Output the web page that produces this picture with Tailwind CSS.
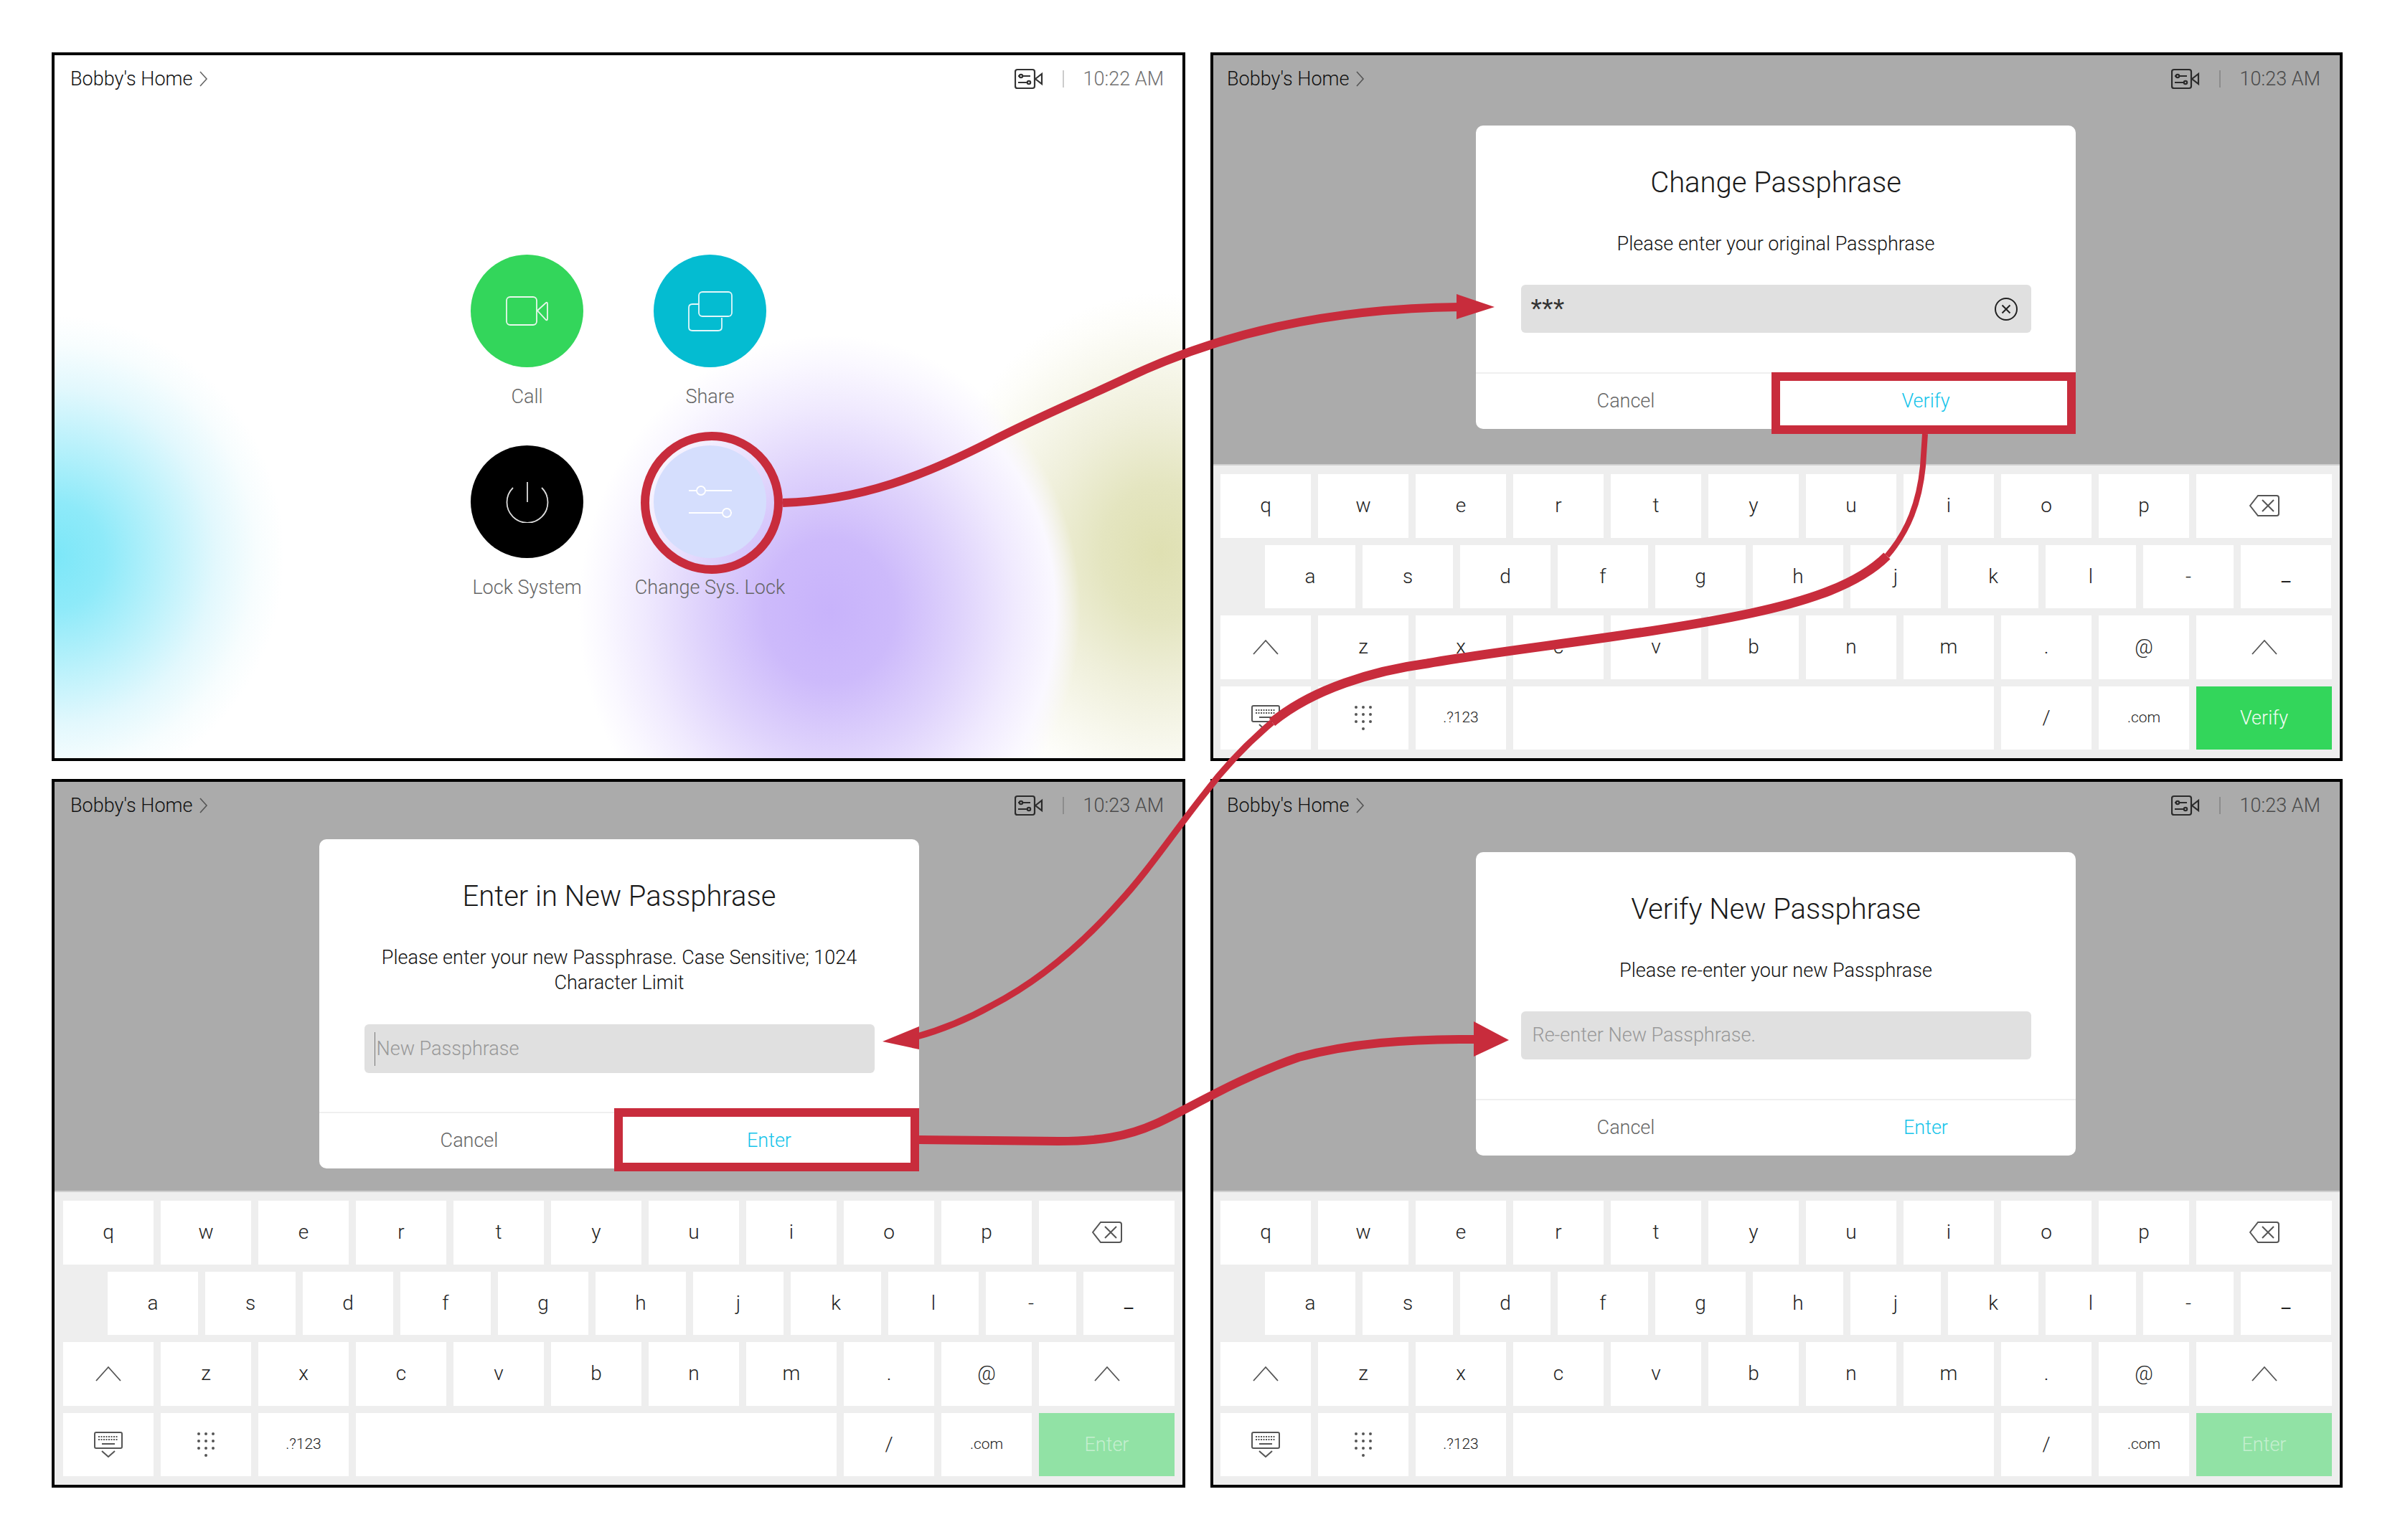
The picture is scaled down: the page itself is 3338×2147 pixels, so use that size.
<!doctype html>
<html>
<head>
<meta charset="utf-8">
<script src="https://cdn.jsdelivr.net/npm/@tailwindcss/browser@4"></script>
</head>
<body class="bg-white font-['Roboto','Liberation_Sans',Arial,sans-serif] font-light">
<div class="relative w-[3338px] h-[2147px] overflow-hidden bg-white pt-[73px] pl-[72px]">
  <div class="grid grid-cols-[1580px_1578px] grid-rows-[988px_988px] gap-x-[35px] gap-y-[25px]">

    <!-- Panel 1 -->
    <section class="border-4 border-black flex flex-col bg-white bg-[radial-gradient(ellipse_320px_335px_at_0px_698px,#7ce7f8_0%,#8eeaf9_22%,#b8f1fb_46%,#e2f8fd_70%,#f7fdfe_88%,#ffffff00_100%),radial-gradient(ellipse_350px_385px_at_1080px_775px,#c8b3fb_0%,#cdbafb_26%,#dfd3fc_52%,#f0eafe_74%,#faf8ff_90%,#ffffff00_100%),radial-gradient(ellipse_310px_360px_at_1540px_692px,#dfe0b2_0%,#e4e5c0_26%,#efefda_52%,#f8f8ee_76%,#fdfdf9_90%,#ffffff00_100%)]">
      <header class="h-[66px] flex items-center pl-[22px] pr-[26px] text-[27px]">
        <span class="text-[#111]">Bobby's Home</span>
        <svg class="ml-[8px]" width="13" height="24" viewBox="0 0 13 24" fill="none" stroke="#666" stroke-width="1.6"><path d="M2 2l9 10-9 10"/></svg>
        <svg class="ml-auto" width="40" height="30" viewBox="0 0 40 30" fill="none" stroke="#333" stroke-width="2.2"><rect x="1" y="2" width="27" height="26" rx="3"/><path d="M5 11h17M5 20h17"/><circle cx="9" cy="11" r="2.2" fill="#fff"/><circle cx="20" cy="20" r="2.2" fill="#fff"/><path d="M29 15l9-7v14z"/></svg>
        <span class="w-[2px] h-[24px] bg-[#ccc] ml-[27px] mr-[27px]"></span>
        <span class="text-[#707070]">10:22 AM</span>
      </header>
      <div class="mt-[212px] mx-auto grid grid-cols-[255px_255px] gap-y-[52px] text-[27px] text-[#666] text-center">
        <div class="flex flex-col items-center">
          <div class="w-[157px] h-[157px] rounded-full bg-[#33d65b] flex items-center justify-center">
            <svg width="60" height="44" viewBox="0 0 60 44" fill="none" stroke="#e8f8ec" stroke-width="1.8"><rect x="1" y="2" width="42" height="39" rx="5"/><path d="M44 21l12-11q2-1 2 2v20q0 3-2 2z"/></svg>
          </div>
          <span class="mt-[25px] leading-[32px]">Call</span>
        </div>
        <div class="flex flex-col items-center">
          <div class="w-[157px] h-[157px] rounded-full bg-[#04bcd1] flex items-center justify-center">
            <svg width="62" height="56" viewBox="0 0 62 56" fill="none" stroke="#e2f7fa" stroke-width="1.8"><path d="M15 18H6q-5 0-5 5v27q0 5 5 5h36q5 0 5-5v-13"/><rect x="15" y="1" width="46" height="34" rx="5"/></svg>
          </div>
          <span class="mt-[25px] leading-[32px]">Share</span>
        </div>
        <div class="flex flex-col items-center">
          <div class="w-[157px] h-[157px] rounded-full bg-black flex items-center justify-center">
            <svg width="60" height="58" viewBox="0 0 60 58" fill="none" stroke="#ddd" stroke-width="1.8"><path d="M30 1v28"/><path d="M10 9a28.500 28.500 0 1 0 40 0"/></svg>
          </div>
          <span class="mt-[25px] leading-[32px]">Lock System</span>
        </div>
        <div class="flex flex-col items-center">
          <div class="w-[157px] h-[157px] rounded-full bg-[#d5defd] flex items-center justify-center">
            <svg width="62" height="46" viewBox="0 0 62 46" fill="none" stroke="#fff" stroke-width="1.8"><path d="M1 7h11M24 7h37M1 38h47M60 38h1"/><circle cx="18" cy="7" r="6"/><circle cx="54" cy="38" r="6"/></svg>
          </div>
          <span class="mt-[25px] leading-[32px] whitespace-nowrap">Change Sys. Lock</span>
        </div>
      </div>
    </section>

    <!-- Panel 2 -->
    <section class="border-4 border-black flex flex-col">
      <div class="h-[570px] bg-[#ababab]">
        <header class="h-[66px] flex items-center pl-[19px] pr-[27px] text-[27px]">
          <span class="text-[#111]">Bobby's Home</span>
          <svg class="ml-[8px]" width="13" height="24" viewBox="0 0 13 24" fill="none" stroke="#555" stroke-width="1.6"><path d="M2 2l9 10-9 10"/></svg>
          <svg class="ml-auto" width="40" height="30" viewBox="0 0 40 30" fill="none" stroke="#2b2b2b" stroke-width="2.2"><rect x="1" y="2" width="27" height="26" rx="3"/><path d="M5 11h17M5 20h17"/><circle cx="9" cy="11" r="2.2" fill="#ababab"/><circle cx="20" cy="20" r="2.2" fill="#ababab"/><path d="M29 15l9-7v14z"/></svg>
          <span class="w-[2px] h-[24px] bg-[#8c8c8c] ml-[27px] mr-[27px]"></span>
          <span class="text-[#4a4a4a]">10:23 AM</span>
        </header>
        <div class="mt-[32px] ml-[366px] w-[836px] h-[423px] bg-white rounded-[10px] flex flex-col text-center">
          <h2 class="mt-[55px] leading-[50px] text-[40px] text-[#1a1a1a] font-light">Change Passphrase</h2>
          <p class="mt-[43px] leading-[35px] text-[27px] text-[#111]">Please enter your original Passphrase</p>
          <div class="mt-[39px] mx-auto w-[711px] h-[67px] shrink-0 bg-[#e0e0e0] rounded-[6px] flex pl-[14px] pr-[18px] text-[#333] text-left">
            <span class="font-['Liberation_Sans'] font-normal text-[40px] leading-[68px] h-[67px]">***</span>
            <svg class="ml-auto self-center" width="34" height="34" viewBox="0 0 34 34" fill="none" stroke="#222" stroke-width="2"><circle cx="17" cy="17" r="15"/><path d="M11.500 11.500l11 11M22.500 11.500l-11 11"/></svg>
          </div>
          <div class="mt-[55px] h-[79px] border-t-2 border-[#efefef] grid grid-cols-2 items-center text-[27px]">
            <span class="text-[#666]">Cancel</span><span class="text-[#14c4ea]">Verify</span>
          </div>
        </div>
      </div>
      <div class="h-[410px] border-t-2 border-[#cfcfcf] bg-[#eeeeee] pt-[12px] pl-[10px] flex flex-col gap-[10px] text-[28px] text-[#222]">
        <div class="flex gap-[10px] *:w-[126px] *:h-[88.500px] *:bg-white *:flex *:items-center *:justify-center *:last:w-[189px]">
          <div>q</div><div>w</div><div>e</div><div>r</div><div>t</div><div>y</div><div>u</div><div>i</div><div>o</div><div>p</div>
          <div><svg width="42" height="32" viewBox="0 0 42 32" fill="none" stroke="#555" stroke-width="2"><path d="M12 2h26q3 0 3 3v22q0 3-3 3H12L1 16z"/><path d="M18 8l16 16M34 8L18 24"/></svg></div>
        </div>
        <div class="flex gap-[10px] pl-[62px] *:w-[126px] *:h-[88.500px] *:bg-white *:flex *:items-center *:justify-center">
          <div>a</div><div>s</div><div>d</div><div>f</div><div>g</div><div>h</div><div>j</div><div>k</div><div>l</div><div>-</div><div class="items-end! pb-[26px] font-normal">_</div>
        </div>
        <div class="flex gap-[10px] *:w-[126px] *:h-[88.500px] *:bg-white *:flex *:items-center *:justify-center *:last:w-[189px]">
          <div><svg width="36" height="22" viewBox="0 0 36 22" fill="none" stroke="#555" stroke-width="1.8"><path d="M1 21L18 2l17 19"/></svg></div>
          <div>z</div><div>x</div><div>c</div><div>v</div><div>b</div><div>n</div><div>m</div><div>.</div><div>@</div>
          <div><svg width="36" height="22" viewBox="0 0 36 22" fill="none" stroke="#555" stroke-width="1.8"><path d="M1 21L18 2l17 19"/></svg></div>
        </div>
        <div class="flex gap-[10px] *:w-[126px] *:h-[88.500px] *:bg-white *:flex *:items-center *:justify-center *:last:w-[189px]">
          <div><svg width="40" height="36" viewBox="0 0 40 36" fill="none" stroke="#555" stroke-width="2"><rect x="1" y="1" width="38" height="22" rx="2"/><path d="M6 7h28M6 11h28" stroke-dasharray="2 1.500"/><path d="M11 17h18M11 27l9 8 9-8"/></svg></div>
          <div><svg width="26" height="36" viewBox="0 0 26 36" fill="#555"><circle cx="3" cy="3" r="2"/><circle cx="13" cy="3" r="2"/><circle cx="23" cy="3" r="2"/><circle cx="3" cy="13" r="2"/><circle cx="13" cy="13" r="2"/><circle cx="23" cy="13" r="2"/><circle cx="3" cy="23" r="2"/><circle cx="13" cy="23" r="2"/><circle cx="23" cy="23" r="2"/><circle cx="13" cy="33" r="2"/></svg></div>
          <div class="text-[21px]">.?123</div><div class="w-[670px]!"></div><div>/</div><div class="text-[21px]">.com</div>
          <div class="bg-[#33d65b]! text-[27px] text-[#f0fcf3]">Verify</div>
        </div>
      </div>
    </section>

    <!-- Panel 3 -->
    <section class="border-4 border-black flex flex-col">
      <div class="h-[570px] bg-[#ababab]">
        <header class="h-[66px] flex items-center pl-[22px] pr-[26px] text-[27px]">
          <span class="text-[#111]">Bobby's Home</span>
          <svg class="ml-[8px]" width="13" height="24" viewBox="0 0 13 24" fill="none" stroke="#555" stroke-width="1.6"><path d="M2 2l9 10-9 10"/></svg>
          <svg class="ml-auto" width="40" height="30" viewBox="0 0 40 30" fill="none" stroke="#2b2b2b" stroke-width="2.2"><rect x="1" y="2" width="27" height="26" rx="3"/><path d="M5 11h17M5 20h17"/><circle cx="9" cy="11" r="2.2" fill="#ababab"/><circle cx="20" cy="20" r="2.2" fill="#ababab"/><path d="M29 15l9-7v14z"/></svg>
          <span class="w-[2px] h-[24px] bg-[#8c8c8c] ml-[27px] mr-[27px]"></span>
          <span class="text-[#4a4a4a]">10:23 AM</span>
        </header>
        <div class="mt-[14px] ml-[369px] w-[836px] h-[459px] bg-white rounded-[10px] flex flex-col text-center">
          <h2 class="mt-[55px] leading-[50px] text-[40px] text-[#1a1a1a] font-light">Enter in New Passphrase</h2>
          <p class="mt-[43px] leading-[35px] text-[27px] text-[#111] px-[60px]">Please enter your new Passphrase. Case Sensitive; 1024 Character Limit</p>
          <div class="mt-[40px] mx-auto w-[711px] h-[68px] shrink-0 bg-[#e0e0e0] rounded-[6px] flex items-center pl-[14px] text-[27px] text-[#999] text-left">
            <span class="w-[1px] h-[47px] bg-[#777] mr-[2px]"></span><span>New Passphrase</span>
          </div>
          <div class="mt-[54px] h-[79px] border-t-2 border-[#efefef] grid grid-cols-2 items-center text-[27px]">
            <span class="text-[#666]">Cancel</span><span class="text-[#14c4ea]">Enter</span>
          </div>
        </div>
      </div>
      <div class="h-[410px] border-t-2 border-[#cfcfcf] bg-[#eeeeee] pt-[12px] pl-[12px] flex flex-col gap-[10px] text-[28px] text-[#222]">
        <div class="flex gap-[10px] *:w-[126px] *:h-[88.500px] *:bg-white *:flex *:items-center *:justify-center *:last:w-[189px]">
          <div>q</div><div>w</div><div>e</div><div>r</div><div>t</div><div>y</div><div>u</div><div>i</div><div>o</div><div>p</div>
          <div><svg width="42" height="32" viewBox="0 0 42 32" fill="none" stroke="#555" stroke-width="2"><path d="M12 2h26q3 0 3 3v22q0 3-3 3H12L1 16z"/><path d="M18 8l16 16M34 8L18 24"/></svg></div>
        </div>
        <div class="flex gap-[10px] pl-[62px] *:w-[126px] *:h-[88.500px] *:bg-white *:flex *:items-center *:justify-center">
          <div>a</div><div>s</div><div>d</div><div>f</div><div>g</div><div>h</div><div>j</div><div>k</div><div>l</div><div>-</div><div class="items-end! pb-[26px] font-normal">_</div>
        </div>
        <div class="flex gap-[10px] *:w-[126px] *:h-[88.500px] *:bg-white *:flex *:items-center *:justify-center *:last:w-[189px]">
          <div><svg width="36" height="22" viewBox="0 0 36 22" fill="none" stroke="#555" stroke-width="1.8"><path d="M1 21L18 2l17 19"/></svg></div>
          <div>z</div><div>x</div><div>c</div><div>v</div><div>b</div><div>n</div><div>m</div><div>.</div><div>@</div>
          <div><svg width="36" height="22" viewBox="0 0 36 22" fill="none" stroke="#555" stroke-width="1.8"><path d="M1 21L18 2l17 19"/></svg></div>
        </div>
        <div class="flex gap-[10px] *:w-[126px] *:h-[88.500px] *:bg-white *:flex *:items-center *:justify-center *:last:w-[189px]">
          <div><svg width="40" height="36" viewBox="0 0 40 36" fill="none" stroke="#555" stroke-width="2"><rect x="1" y="1" width="38" height="22" rx="2"/><path d="M6 7h28M6 11h28" stroke-dasharray="2 1.500"/><path d="M11 17h18M11 27l9 8 9-8"/></svg></div>
          <div><svg width="26" height="36" viewBox="0 0 26 36" fill="#555"><circle cx="3" cy="3" r="2"/><circle cx="13" cy="3" r="2"/><circle cx="23" cy="3" r="2"/><circle cx="3" cy="13" r="2"/><circle cx="13" cy="13" r="2"/><circle cx="23" cy="13" r="2"/><circle cx="3" cy="23" r="2"/><circle cx="13" cy="23" r="2"/><circle cx="23" cy="23" r="2"/><circle cx="13" cy="33" r="2"/></svg></div>
          <div class="text-[21px]">.?123</div><div class="w-[670px]!"></div><div>/</div><div class="text-[21px]">.com</div>
          <div class="bg-[#91e2a5]! text-[27px] text-[#c5efd0]">Enter</div>
        </div>
      </div>
    </section>

    <!-- Panel 4 -->
    <section class="border-4 border-black flex flex-col">
      <div class="h-[570px] bg-[#ababab]">
        <header class="h-[66px] flex items-center pl-[19px] pr-[27px] text-[27px]">
          <span class="text-[#111]">Bobby's Home</span>
          <svg class="ml-[8px]" width="13" height="24" viewBox="0 0 13 24" fill="none" stroke="#555" stroke-width="1.6"><path d="M2 2l9 10-9 10"/></svg>
          <svg class="ml-auto" width="40" height="30" viewBox="0 0 40 30" fill="none" stroke="#2b2b2b" stroke-width="2.2"><rect x="1" y="2" width="27" height="26" rx="3"/><path d="M5 11h17M5 20h17"/><circle cx="9" cy="11" r="2.2" fill="#ababab"/><circle cx="20" cy="20" r="2.2" fill="#ababab"/><path d="M29 15l9-7v14z"/></svg>
          <span class="w-[2px] h-[24px] bg-[#8c8c8c] ml-[27px] mr-[27px]"></span>
          <span class="text-[#4a4a4a]">10:23 AM</span>
        </header>
        <div class="mt-[32px] ml-[366px] w-[836px] h-[423px] bg-white rounded-[10px] flex flex-col text-center">
          <h2 class="mt-[55px] leading-[50px] text-[40px] text-[#1a1a1a] font-light">Verify New Passphrase</h2>
          <p class="mt-[43px] leading-[35px] text-[27px] text-[#111]">Please re-enter your new Passphrase</p>
          <div class="mt-[39px] mx-auto w-[711px] h-[67px] shrink-0 bg-[#e0e0e0] rounded-[6px] flex items-center pl-[16px] text-[27px] text-[#999] text-left">Re-enter New Passphrase.</div>
          <div class="mt-[55px] h-[79px] border-t-2 border-[#efefef] grid grid-cols-2 items-center text-[27px]">
            <span class="text-[#666]">Cancel</span><span class="text-[#14c4ea]">Enter</span>
          </div>
        </div>
      </div>
      <div class="h-[410px] border-t-2 border-[#cfcfcf] bg-[#eeeeee] pt-[12px] pl-[10px] flex flex-col gap-[10px] text-[28px] text-[#222]">
        <div class="flex gap-[10px] *:w-[126px] *:h-[88.500px] *:bg-white *:flex *:items-center *:justify-center *:last:w-[189px]">
          <div>q</div><div>w</div><div>e</div><div>r</div><div>t</div><div>y</div><div>u</div><div>i</div><div>o</div><div>p</div>
          <div><svg width="42" height="32" viewBox="0 0 42 32" fill="none" stroke="#555" stroke-width="2"><path d="M12 2h26q3 0 3 3v22q0 3-3 3H12L1 16z"/><path d="M18 8l16 16M34 8L18 24"/></svg></div>
        </div>
        <div class="flex gap-[10px] pl-[62px] *:w-[126px] *:h-[88.500px] *:bg-white *:flex *:items-center *:justify-center">
          <div>a</div><div>s</div><div>d</div><div>f</div><div>g</div><div>h</div><div>j</div><div>k</div><div>l</div><div>-</div><div class="items-end! pb-[26px] font-normal">_</div>
        </div>
        <div class="flex gap-[10px] *:w-[126px] *:h-[88.500px] *:bg-white *:flex *:items-center *:justify-center *:last:w-[189px]">
          <div><svg width="36" height="22" viewBox="0 0 36 22" fill="none" stroke="#555" stroke-width="1.8"><path d="M1 21L18 2l17 19"/></svg></div>
          <div>z</div><div>x</div><div>c</div><div>v</div><div>b</div><div>n</div><div>m</div><div>.</div><div>@</div>
          <div><svg width="36" height="22" viewBox="0 0 36 22" fill="none" stroke="#555" stroke-width="1.8"><path d="M1 21L18 2l17 19"/></svg></div>
        </div>
        <div class="flex gap-[10px] *:w-[126px] *:h-[88.500px] *:bg-white *:flex *:items-center *:justify-center *:last:w-[189px]">
          <div><svg width="40" height="36" viewBox="0 0 40 36" fill="none" stroke="#555" stroke-width="2"><rect x="1" y="1" width="38" height="22" rx="2"/><path d="M6 7h28M6 11h28" stroke-dasharray="2 1.500"/><path d="M11 17h18M11 27l9 8 9-8"/></svg></div>
          <div><svg width="26" height="36" viewBox="0 0 26 36" fill="#555"><circle cx="3" cy="3" r="2"/><circle cx="13" cy="3" r="2"/><circle cx="23" cy="3" r="2"/><circle cx="3" cy="13" r="2"/><circle cx="13" cy="13" r="2"/><circle cx="23" cy="13" r="2"/><circle cx="3" cy="23" r="2"/><circle cx="13" cy="23" r="2"/><circle cx="23" cy="23" r="2"/><circle cx="13" cy="33" r="2"/></svg></div>
          <div class="text-[21px]">.?123</div><div class="w-[670px]!"></div><div>/</div><div class="text-[21px]">.com</div>
          <div class="bg-[#91e2a5]! text-[27px] text-[#c5efd0]">Enter</div>
        </div>
      </div>
    </section>
  </div>

  <!-- Annotation overlay -->
  <svg class="absolute inset-0 pointer-events-none" width="3338" height="2147" viewBox="0 0 3338 2147" fill="none" stroke="#c82c3c">
    <circle cx="992" cy="701" r="93" stroke-width="12"/>
    <rect x="2475" y="525" width="412" height="74" stroke-width="12"/>
    <rect x="862" y="1551" width="413" height="76" stroke-width="12"/>
    <path stroke-width="12" d="M1091 701C1200 698 1290 662 1380 616C1450 580 1500 560 1568 528C1700 465 1850 430 2035 428"/>
    <path fill="#c82c3c" stroke="none" d="M2030 410L2083 428L2030 445Z"/>
    <path stroke-width="8" d="M2683 605L2680 650C2675 700 2660 740 2630 775"/>
    <path stroke-width="13" d="M2630 775C2590 815 2520 838 2440 855C2300 885 2100 905 1989 925C1915 935 1830 960 1773 1007"/>
    <path stroke-width="9" d="M1773 1007C1740 1035 1710 1065 1680 1105C1640 1155 1600 1215 1558 1260C1500 1325 1440 1372 1382 1402C1350 1420 1315 1435 1275 1446"/>
    <path fill="#c82c3c" stroke="none" d="M1230 1452L1281 1431L1281 1463Z"/>
    <path stroke-width="12" d="M1281 1589L1475 1591C1530 1591 1570 1585 1610 1567C1650 1550 1720 1505 1810 1474C1880 1455 1960 1448 2060 1449"/>
    <path fill="#c82c3c" stroke="none" d="M2054 1424L2103 1450L2054 1473Z"/>
  </svg>
</div>
</body>
</html>
